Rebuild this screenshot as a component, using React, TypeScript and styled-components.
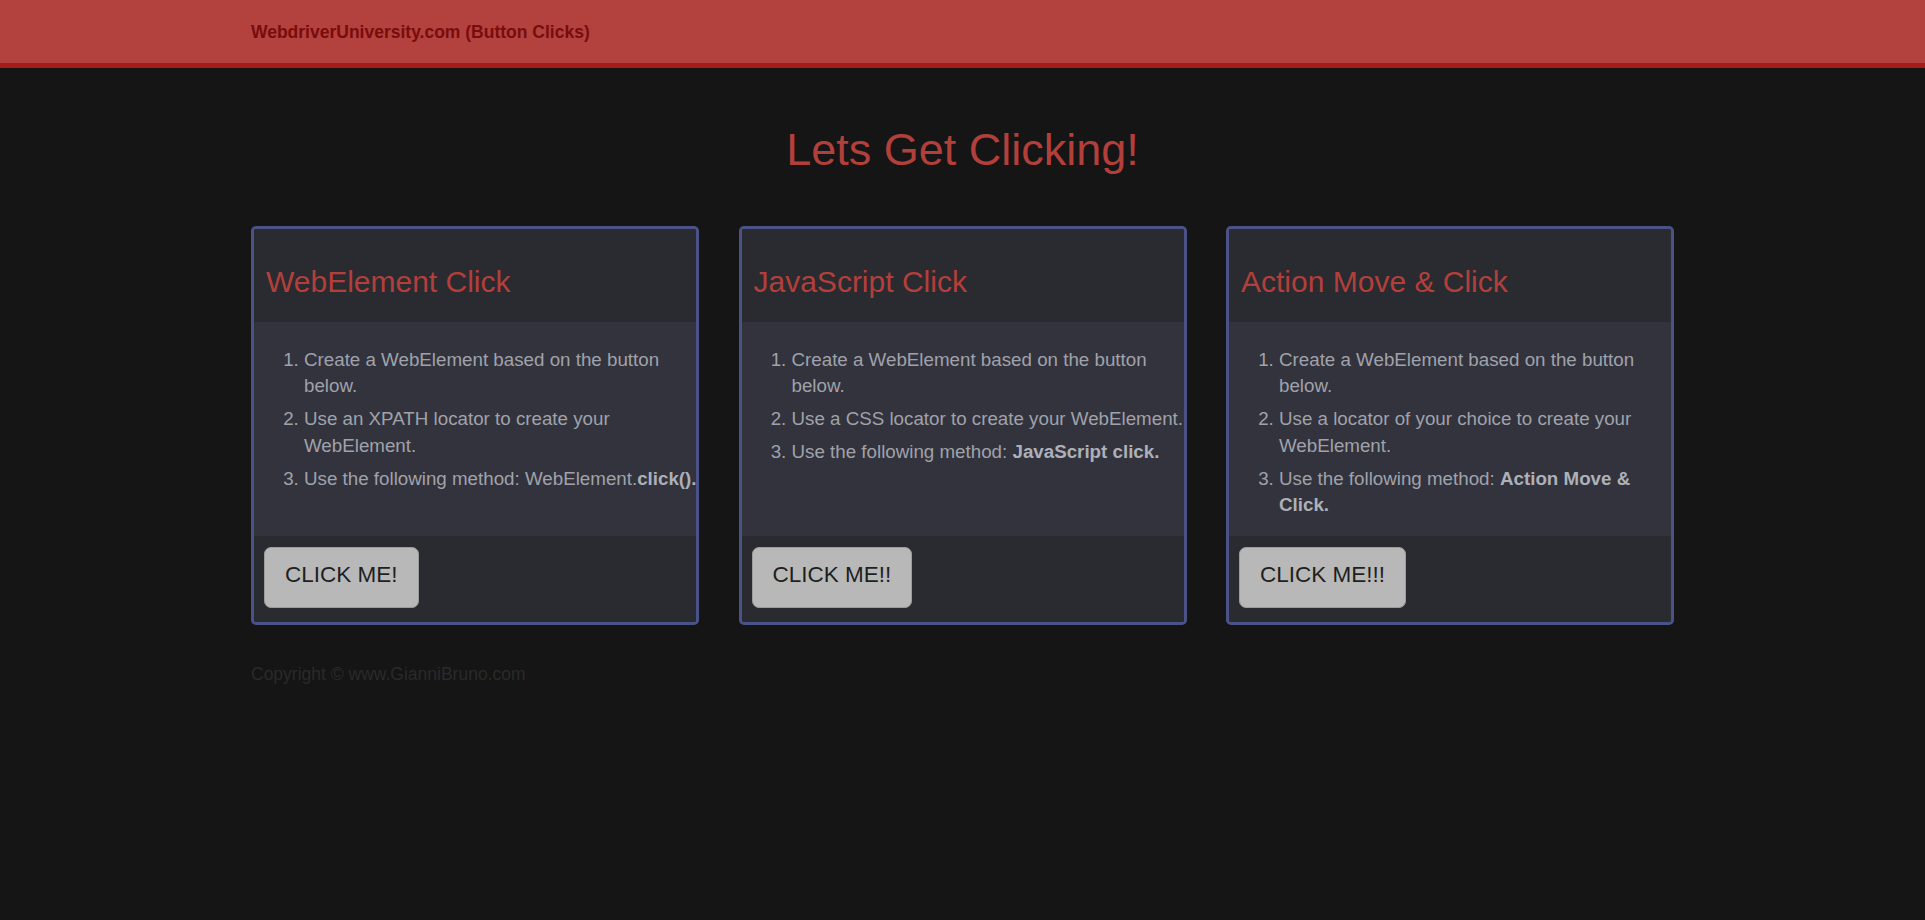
import React from "react";
import styled, { createGlobalStyle } from "styled-components";

type ClickCard = {
  id: string;
  title: string;
  steps: React.ReactNode[];
  buttonLabel: string;
};

const GlobalStyle = createGlobalStyle`
  body {
    margin: 0;
    background: #151515;
    font-family: "Liberation Sans", Arial, sans-serif;
  }
`;

const Navbar = styled.nav`
  height: 63px;
  background: #b3413d;
  border-bottom: 5px solid #a51d19;
`;

const NavInner = styled.div`
  width: 1423px;
  height: 100%;
  margin: 0 auto;
  display: flex;
  align-items: center;
`;

const Brand = styled.a`
  font-size: 17.5px;
  line-height: 20px;
  font-weight: bold;
  color: #790c0c;
  text-decoration: none;
  padding-top: 1px;
`;

const PageWrapper = styled.main`
  width: 1423px;
  margin: 0 auto;
`;

const PageTitle = styled.h1`
  margin: 57px 0 51px;
  font-size: 45px;
  line-height: 49.5px;
  font-weight: normal;
  text-align: center;
  color: #b33f3b;
`;

const CardsRow = styled.div`
  display: grid;
  grid-template-columns: repeat(3, 1fr);
  column-gap: 39.5px;
`;

const Card = styled.div`
  border: 3px solid #4a5287;
  border-radius: 5px;
  overflow: hidden;
  background: #2a2b30;
`;

const CardHeader = styled.div`
  padding: 36px 12px 24px;
  background: #2a2b30;
`;

const CardTitle = styled.h3`
  margin: 0;
  font-size: 30px;
  line-height: 33px;
  font-weight: normal;
  color: #b33f3b;
`;

const CardBody = styled.div`
  height: 214px;
  box-sizing: border-box;
  padding-top: 25px;
  background: #32333c;
`;

const StepList = styled.ol`
  margin: 0 -6px 0 0;
  padding-left: 50px;
  font-size: 18.75px;
  line-height: 26.8px;
  color: #a0a2ab;

  li {
    margin-bottom: 6px;
  }

  b {
    color: #aeb0b8;
  }
`;

const CardFooter = styled.div`
  padding: 11px 10px 14px;
  background: #2a2b30;
`;

const ClickButton = styled.button`
  padding: 10px 20px 16px;
  border: 1px solid #9c9c9c;
  border-radius: 7px;
  background: #b8b8b8;
  color: #1f1f1f;
  font-family: "Liberation Sans", Arial, sans-serif;
  font-size: 22.5px;
  line-height: 33px;
  cursor: pointer;
`;

const Copyright = styled.p`
  margin: 37px 0 0;
  font-size: 17.5px;
  line-height: 25px;
  color: #2a2a2a;
`;

const cards: ClickCard[] = [
  {
    id: "button1",
    title: "WebElement Click",
    steps: [
      "Create a WebElement based on the button below.",
      "Use an XPATH locator to create your WebElement.",
      <>
        Use the following method: WebElement.<b>click().</b>
      </>,
    ],
    buttonLabel: "CLICK ME!",
  },
  {
    id: "button2",
    title: "JavaScript Click",
    steps: [
      "Create a WebElement based on the button below.",
      "Use a CSS locator to create your WebElement.",
      <>
        Use the following method: <b>JavaScript click.</b>
      </>,
    ],
    buttonLabel: "CLICK ME!!",
  },
  {
    id: "button3",
    title: "Action Move & Click",
    steps: [
      "Create a WebElement based on the button below.",
      "Use a locator of your choice to create your WebElement.",
      <>
        Use the following method: <b>Action Move &amp; Click.</b>
      </>,
    ],
    buttonLabel: "CLICK ME!!!",
  },
];

const App = () => {
  return (
    <>
      <GlobalStyle />
      <Navbar>
        <NavInner>
          <Brand href="#">WebdriverUniversity.com (Button Clicks)</Brand>
        </NavInner>
      </Navbar>

      <PageWrapper>
        <PageTitle>Lets Get Clicking!</PageTitle>

        <CardsRow>
          {cards.map((card) => (
            <Card key={card.id}>
              <CardHeader>
                <CardTitle>{card.title}</CardTitle>
              </CardHeader>
              <CardBody>
                <StepList>
                  {card.steps.map((step, i) => (
                    <li key={i}>{step}</li>
                  ))}
                </StepList>
              </CardBody>
              <CardFooter>
                <ClickButton id={card.id}>{card.buttonLabel}</ClickButton>
              </CardFooter>
            </Card>
          ))}
        </CardsRow>

        <Copyright>Copyright © www.GianniBruno.com</Copyright>
      </PageWrapper>
    </>
  );
};

export default App;
